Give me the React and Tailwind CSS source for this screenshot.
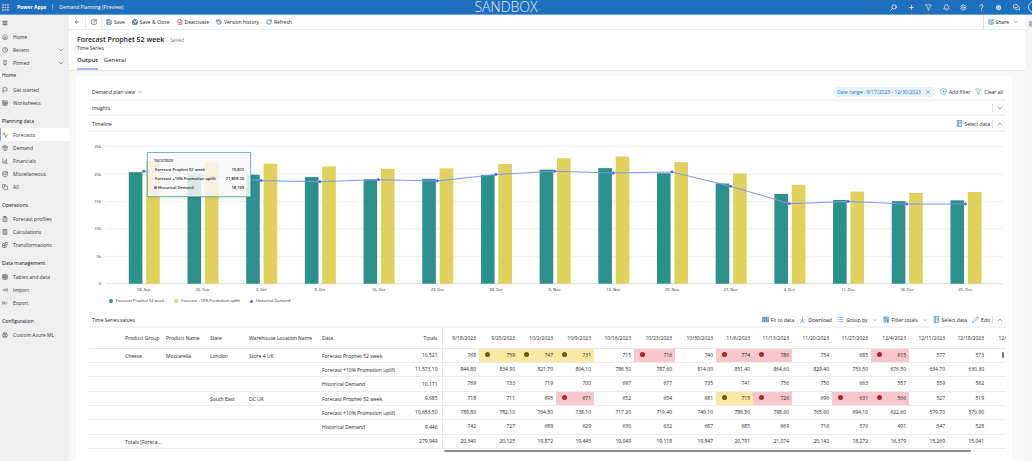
import React from "react";
import {
  ArrowDownToLine, ArrowLeft, ArrowLeftToLine, ArrowRightToLine, Bell, ChartColumnIncreasing, ChevronDown, ChevronUp, CirclePlus,
  Clock, Copy, Database, SquareArrowOutUpRight, FileX, Filter, Flag, Grid3x3, History, House, LayoutGrid,
  List, Menu, MessagesSquare, Activity, Package, Pencil, Pin, Plus, RotateCw, Save, SaveAll, Settings,
  FunnelX, Calculator, ClipboardList, Blocks, Sheet, X, Brain,
} from "lucide-react";

const homeNav = [
  { label: "Home", icon: House },
  { label: "Recent", icon: Clock, expandable: true },
  { label: "Pinned", icon: Pin, expandable: true },
];

const navGroups = [
  { title: "Planning data", items: [
    { label: "Forecasts", icon: Activity, active: true },
    { label: "Demand", icon: Package },
    { label: "Financials", icon: ChartColumnIncreasing },
    { label: "Miscellaneous", icon: Database },
    { label: "All", icon: Copy },
  ] },
  { title: "Operations", items: [
    { label: "Forecast profiles", icon: ClipboardList },
    { label: "Calculations", icon: Calculator },
    { label: "Transformations", icon: Blocks },
  ] },
  { title: "Data management", items: [
    { label: "Tables and data", icon: Grid3x3 },
    { label: "Import", icon: ArrowRightToLine },
    { label: "Export", icon: ArrowLeftToLine },
  ] },
  { title: "Configuration", items: [{ label: "Custom Azure ML", icon: Brain }] },
];

function NavItem({ label, icon: Icon, active, expandable }) {
  return (
    <a
      href="#"
      className={
        active
          ? "flex h-[13px] items-center border-l border-[#8fa0ee] bg-white pl-px text-[5px]"
          : "flex h-[13px] items-center pl-0.5 text-[5px]"
      }
    >
      <Icon className="size-1.5 text-[#444]" />
      <span className="ml-[5px] flex-1">{label}</span>
      {expandable && <ChevronDown className="mr-1 size-2 text-[#444]" strokeWidth={1.5} />}
    </a>
  );
}

function Sidebar() {
  return (
    <nav className="w-[69px] shrink-0 bg-[#efefef] text-[#333]">
      <div className="flex h-[15px] items-center pl-0.5">
        <button type="button" aria-label="Toggle navigation"><Menu className="size-1.5" strokeWidth={3} /></button>
      </div>
      {homeNav.map((item) => <NavItem key={item.label} {...item} />)}
      <h2 className="h-3.5 pl-0.5 text-[5px] leading-[13px] font-medium text-[#111]">Home</h2>
      <NavItem label="Get started" icon={Flag} />
      <NavItem label="Worksheets" icon={Sheet} />
      {navGroups.map((group) => (
        <section key={group.title}>
          <h2 className="h-[19px] pt-[5px] pl-0.5 text-[5px] leading-[14px] font-medium text-[#111]">{group.title}</h2>
          {group.items.map((item) => <NavItem key={item.label} {...item} />)}
        </section>
      ))}
    </nav>
  );
}

function AppLauncherIcon() {
  return (
    <svg viewBox="0 0 7 7" className="size-[7px]" fill="#c5dcf3">
      {[0, 2.5, 5].map((y) => [0, 2.5, 5].map((x) => <rect key={`${x}-${y}`} x={x + 0.2} y={y + 0.2} width="1.5" height="1.5" />))}
    </svg>
  );
}

function MirroredSearch({ className }) {
  return (
    <svg viewBox="0 0 24 24" className={className} fill="none" stroke="currentColor" strokeWidth="2.5" strokeLinecap="round">
      <circle cx="14" cy="10" r="7.5" />
      <path d="M8.5 15.5 2 22" />
    </svg>
  );
}

function HelpIcon({ className }) {
  return (
    <svg viewBox="0 0 24 24" className={className} fill="none" stroke="currentColor" strokeWidth="3" strokeLinecap="round">
      <path d="M7 7a5 5 0 1 1 8 4c-2 1.500-3 2.500-3 5" />
      <path d="M12 21.500v.1" />
    </svg>
  );
}

function FeedbackIcon({ className }) {
  return (
    <svg viewBox="0 0 24 24" className={className}>
      <circle cx="12" cy="12" r="9" fill="#c5dcf3" />
      <circle cx="9" cy="10" r="1.500" fill="#1f6fbd" />
      <circle cx="15" cy="10" r="1.500" fill="#1f6fbd" />
      <path d="M8 14.500q4 3.500 8 0" stroke="#1f6fbd" strokeWidth="1.500" fill="none" />
    </svg>
  );
}

function TableIcon({ className }) {
  return (
    <svg viewBox="0 0 24 24" className={className} fill="none" stroke="currentColor" strokeWidth="2">
      <rect x="2" y="4" width="20" height="16" fill="#b9d5f2" />
      <path d="M2 9h20M2 14.500h20M9 4v16M15.500 4v16" />
    </svg>
  );
}

function SelectDataIcon({ className }) {
  return (
    <svg viewBox="0 0 24 24" className={className} fill="none" stroke="currentColor" strokeWidth="2">
      <rect x="4" y="2" width="16" height="20" fill="#dcebfa" />
      <path d="M8.500 2v20M12 8h5M12 13h5" />
    </svg>
  );
}

function FilterTotalsIcon({ className }) {
  return (
    <svg viewBox="0 0 24 24" className={className} fill="none" stroke="currentColor" strokeWidth="2">
      <path d="M10 21H3V3h15v7M3 8h15M8 3v18" fill="#dcebfa" />
      <path d="M11 13h11l-4 4.500V22h-3v-4.500z" fill="currentColor" />
    </svg>
  );
}

const headerActions = [
  ["Search", MirroredSearch], ["New", Plus], ["Filter", Filter], ["Notifications", Bell],
  ["Settings", Settings], ["Help", HelpIcon], ["Feedback", FeedbackIcon], ["Chat", MessagesSquare],
];

function Header() {
  return (
    <header className="flex h-[15px] items-center border-b border-[#6aa3dc] bg-[#1f6fbd] text-white">
      <div className="flex flex-1 items-center">
        <button type="button" aria-label="App launcher" className="ml-0.5"><AppLauncherIcon /></button>
        <span className="ml-2 text-[5px] font-bold">Power Apps</span>
        <span className="mx-1.5 h-1.5 w-px bg-[#6aa3dc]" />
        <span className="text-[5px] font-medium">Demand Planning (Preview)</span>
      </div>
      <span className="mr-5 text-[14px] leading-[14px] font-light text-[#e4eff9]">SANDBOX</span>
      <div className="flex flex-1 items-center justify-end">
        <div className="flex w-[130px] justify-between">
          {headerActions.map(([label, Icon]) => (
            <button key={label} type="button" aria-label={label}><Icon className="size-[7px]" strokeWidth={2.2} /></button>
          ))}
        </div>
        <button type="button" aria-label="Account" className="-mr-2 ml-2 size-3 rounded-full border border-[#b9d5f0]" />
      </div>
    </header>
  );
}

function Command({ label, icon: Icon, tone }) {
  return (
    <button type="button" className="flex items-center gap-0.5">
      <Icon className={tone === "red" ? "size-1.5 text-[#b5434a]" : "size-1.5 text-[#2b4a70]"} strokeWidth={2.5} />
      {label}
    </button>
  );
}

function CommandBar() {
  return (
    <div className="flex h-[15px] items-center border-b border-[#ebebeb] bg-white text-[5px] text-[#222]">
      <button type="button" aria-label="Back" className="flex w-4 justify-center"><ArrowLeft className="size-1.5" /></button>
      <span className="h-full w-px bg-[#ebebeb]" />
      <button type="button" aria-label="Open in new window" className="flex w-[15px] justify-center"><SquareArrowOutUpRight className="size-1.5" /></button>
      <span className="h-full w-px bg-[#ebebeb]" />
      <div className="ml-1 flex gap-[7px]">
        <Command label="Save" icon={Save} />
        <Command label="Save & Close" icon={SaveAll} />
        <Command label="Deactivate" icon={FileX} tone="red" />
        <Command label="Version history" icon={History} />
        <Command label="Refresh" icon={RotateCw} />
      </div>
      <button type="button" className="ml-auto flex h-full items-center gap-0.5 border-l border-[#ddd] pr-1.5 pl-1">
        <SquareArrowOutUpRight className="size-1.5 fill-[#b9d5f2] text-[#2f6fbd]" />Share<ChevronDown className="ml-0.5 size-1.5" strokeWidth={1.5} />
      </button>
    </div>
  );
}

const weeks = ["18. Sep", "25. Sep", "2. Oct", "9. Oct", "16. Oct", "23. Oct", "30. Oct", "6. Nov", "13. Nov", "20. Nov", "27. Nov", "4. Dec", "11. Dec", "18. Dec", "25. Dec"];
const forecast = [20340, 20125, 19872, 19445, 19049, 19118, 19847, 20791, 21074, 20142, 18272, 16379, 15269, 15041, 15200];
const demand = [20500, 19750, 18779, 18600, 18960, 18720, 19910, 20500, 20180, 20370, 17760, 14590, 14990, 14530, 14530];

const BASE = 151.7;
const px = (i) => 54.8 + i * 58.69;
const py = (v) => BASE - v * 0.005485;

function Chart() {
  return (
    <svg viewBox="0 0 917 164" className="block h-auto w-full" role="img" aria-label="Timeline">
      {[0, 5, 10, 15, 20, 25].map((k) => (
        <g key={k}>
          <line x1="17" x2="914" y1={py(k * 1000)} y2={py(k * 1000)} stroke={k ? "#f1f1f1" : "#dcdfe6"} strokeWidth="1" />
          <text x="12" y={py(k * 1000) + 1.5} textAnchor="end" fontSize="4" fontWeight="500" fill="#222">{k ? `${k}k` : "0"}</text>
        </g>
      ))}
      {weeks.map((week, i) => (
        <g key={week}>
          <rect x={px(i) - 15} width="13.6" y={py(forecast[i])} height={BASE - py(forecast[i])} fill="#2c918d" />
          <rect x={px(i) + 2.4} width="13.6" y={py(forecast[i] * 1.1)} height={BASE - py(forecast[i] * 1.1)} fill="#e0d15c" />
          <line x1={px(i)} x2={px(i)} y1={BASE} y2={BASE + 2} stroke="#dcdfe6" strokeWidth="0.7" />
          <text x={px(i)} y="159" textAnchor="middle" fontSize="4" fontWeight="500" fill="#222">{week}</text>
        </g>
      ))}
      <polyline points={demand.map((v, i) => `${px(i)},${py(v)}`).join(" ")} fill="none" stroke="#8094ea" strokeWidth="1" />
      {demand.map((v, i) => <circle key={i} cx={px(i)} cy={py(v)} r="1.4" fill="#4a63e8" />)}
    </svg>
  );
}

function ChartTooltip() {
  const rows = [["Forecast Prophet 52 week", "19,872"], ["Forecast +10% Promotion uplift", "21,859.20"], ["Historical Demand", "18,739"]];
  return (
    <div className="absolute top-5 left-[58px] w-[104px] border border-[#7fb9b6] bg-[#f8f8f8]/85 px-1.5 pt-[3px] pb-1 text-[4px] leading-[9px] font-semibold text-[#222] shadow-sm">
      <div>10/2/2023</div>
      {rows.map(([name, value], i) => (
        <div key={name} className="flex items-center">
          {i === 2 ? <span className="mr-px size-[3px] rounded-full bg-[#4a63e8]" /> : <span className="w-px" />}
          <span className="flex-1">{name}</span>
          <span>{value}</span>
        </div>
      ))}
    </div>
  );
}

function Tool({ label, icon: Icon, menu }) {
  return (
    <button type="button" className="flex items-center gap-0.5">
      <Icon className="size-[7px] text-[#3f7fc8]" strokeWidth={1.8} />
      {label}
      {menu && <ChevronDown className="ml-0.5 size-1.5 text-[#666]" strokeWidth={1.5} />}
    </button>
  );
}

function SectionBar({ title, open, tall, children }) {
  return (
    <div className={tall ? "flex h-4 items-center border-b-2 border-[#f3f3f3] pt-px pl-[3px]" : "flex h-[15px] items-center border-b-2 border-[#f3f3f3] pl-[3px]"}>
      <h2 className="flex-1 font-medium">{title}</h2>
      <div className="flex items-center gap-[5px]">{children}</div>
      <span className="ml-0.5 h-2 w-px bg-[#ddd]" />
      <button type="button" aria-label={open ? `Collapse ${title}` : `Expand ${title}`} className="flex w-[13px] justify-center">
        {open ? <ChevronUp className="size-2 text-[#444]" strokeWidth={1.5} /> : <ChevronDown className="size-2 text-[#444]" strokeWidth={1.5} />}
      </button>
    </div>
  );
}

const dates = ["9/18/2023", "9/25/2023", "10/2/2023", "10/9/2023", "10/16/2023", "10/23/2023", "10/30/2023", "11/6/2023", "11/13/2023", "11/20/2023", "11/27/2023", "12/4/2023", "12/11/2023", "12/18/2023"];
const columnWidths = ["w-[37px]", "w-[39px]", "w-[38px]", "w-[38px]", "w-[40px]", "w-[41px]", "w-[41px]", "w-[37px]", "w-[39px]", "w-[40px]", "w-[39px]", "w-[38px]", "w-[39px]", "w-[39px]"];

const tableRows = [
  { lead: ["Cheese", "Mozzarella", "London", "Store 4 UK", "Forecast Prophet 52 week"], total: "10,521",
    values: "768 759 747 731 715 716 740 774 786 754 685 615 577 573", marks: { 1: "y", 2: "y", 3: "y", 5: "r", 7: "r", 8: "r", 11: "r" } },
  { lead: ["", "", "", "", "Forecast +10% Promotion uplift"], total: "11,573.10",
    values: "844.80 834.90 821.70 804.10 786.50 787.60 814.00 851.40 864.60 829.40 753.50 676.50 634.70 630.30" },
  { lead: ["", "", "", "", "Historical Demand"], total: "10,171", last: true,
    values: "769 733 719 700 697 677 735 741 756 750 663 557 559 562" },
  { lead: ["", "", "South East", "DC UK", "Forecast Prophet 52 week"], total: "9,685",
    values: "718 711 695 671 652 654 681 715 726 696 631 566 527 519", marks: { 3: "r", 7: "y", 8: "r", 10: "r", 11: "r" } },
  { lead: ["", "", "", "", "Forecast +10% Promotion uplift"], total: "10,653.50",
    values: "789.80 782.10 764.50 738.10 717.20 719.40 749.10 786.50 798.60 765.60 694.10 622.60 579.70 570.90" },
  { lead: ["", "", "", "", "Historical Demand"], total: "9,446", last: true,
    values: "742 727 689 629 630 632 687 685 669 716 576 491 547 528" },
  { lead: ["Totals [Foreca...", "", "", "", ""], total: "279,949",
    values: "20,340 20,125 19,872 19,445 19,049 19,118 19,847 20,791 21,074 20,142 18,272 16,379 15,269 15,041" },
];

function ValueCell({ value, mark }) {
  const tone = mark === "y" ? "bg-[#fbe9a3]" : mark === "r" ? "bg-[#f8c6cd]" : "";
  return (
    <td className={`p-0 pr-[3px] pb-px text-right ${tone}`}>
      <div className="flex items-center justify-end">
        {mark && <span className={mark === "y" ? "mr-auto ml-1.5 size-[5px] rounded-full bg-[#6b5a12]" : "mr-auto ml-1.5 size-[5px] rounded-full bg-[#a8232f]"} />}
        <span>{value}</span>
      </div>
    </td>
  );
}

function SeriesTable() {
  return (
    <div className="relative overflow-hidden">
      <table className="w-[917px] table-fixed border-collapse leading-[8px]">
        <colgroup>
          <col className="w-9" /><col className="w-[41px]" /><col className="w-11" /><col className="w-[39px]" />
          <col className="w-[73px]" /><col className="w-[80px]" /><col className="w-10" />
          {columnWidths.map((w, i) => <col key={i} className={w} />)}
          <col />
        </colgroup>
        <thead>
          <tr className="h-5 border-b border-[#e8e8e8] text-left">
            <th className="p-0" />
            {["Product Group", "Product Name", "State", "Warehouse Location Name", "Data"].map((h) => (
              <th key={h} className="p-0 font-medium whitespace-nowrap">{h}</th>
            ))}
            <th className="border-r border-[#e8e8e8] p-0 pr-1 text-right font-medium">Totals</th>
            {dates.map((d) => <th key={d} className="p-0 pr-[3px] text-right font-medium">{d}</th>)}
            <th className="p-0 text-right font-medium whitespace-nowrap">12/</th>
          </tr>
        </thead>
        <tbody>
          {tableRows.map((row, r) => (
            <tr key={r} className={row.last ? "h-[15px] border-b border-[#ececec]" : "h-3.5 border-b border-[#ececec]"}>
              <td className="p-0" />
              {row.lead.map((text, i) => <td key={i} className="p-0 pt-px whitespace-nowrap">{text}</td>)}
              <td className="border-r border-[#e8e8e8] p-0 pr-1 text-right">{row.total}</td>
              {row.values.split(" ").map((v, i) => <ValueCell key={i} value={v} mark={row.marks && row.marks[i]} />)}
              <td className="p-0" />
            </tr>
          ))}
        </tbody>
      </table>
      <span className="absolute top-6 right-0.5 h-1.5 w-0.5 rounded-full bg-[#777]" />
    </div>
  );
}

export default function App() {
  return (
    <div className="flex min-h-screen flex-col overflow-hidden bg-white font-['Open_Sans','Noto_Sans',sans-serif] text-[5px] leading-[8px] text-[#1c1c1c]">
      <Header />
      <div className="flex flex-1">
        <Sidebar />
        <main className="flex min-w-0 flex-1 flex-col bg-[#f9f8f7]">
          <CommandBar />
          <div className="border-b border-[#e6e6e6] bg-white pt-[5px] pl-2">
            <div className="flex h-[9px] items-center gap-[3px]">
              <h1 className="text-[7px] font-semibold">Forecast Prophet 52 week</h1>
              <span className="text-[#777]">- Saved</span>
            </div>
            <p>Time Series</p>
            <div role="tablist" className="mt-1 flex gap-1.5 text-[6px]">
              <button type="button" role="tab" aria-selected="true" className="border-b-2 border-[#aab6f2] pb-1 font-semibold">Output</button>
              <button type="button" role="tab" aria-selected="false" className="border-b-2 border-transparent pb-1">General</button>
            </div>
          </div>
          <div className="mt-[5px] mr-[13px] ml-[7px] flex-1 bg-white pt-2 pr-1.5 pl-[13px]">
            <div className="flex h-[17px] items-center border-b-2 border-[#f3f3f3] pr-[3px] pl-[3px]">
              <button type="button" className="flex items-center gap-0.5">Demand plan view<ChevronDown className="size-1.5" strokeWidth={1.5} /></button>
              <div className="ml-auto flex items-center gap-[5px]">
                <span className="flex h-2.5 items-center gap-1 rounded-full bg-[#e8f2fc] px-1 text-[#2b6cb8]">
                  Date range : 9/17/2023 - 12/30/2023
                  <button type="button" aria-label="Remove date range"><X className="size-1.5" /></button>
                </span>
                <Tool label="Add filter" icon={CirclePlus} />
                <Tool label="Clear all" icon={FunnelX} />
              </div>
            </div>
            <SectionBar title="Insights" />
            <SectionBar title="Timeline" open tall><Tool label="Select data" icon={SelectDataIcon} /></SectionBar>
            <div className="relative">
              <Chart />
              <ChartTooltip />
            </div>
            <div className="flex h-4 gap-2.5 pt-px pl-5 text-[4px] text-[#222]">
              <span className="flex h-2 items-center gap-[3px]"><i className="size-1 rounded-full bg-[#2c918d]" />Forecast Prophet 52 week</span>
              <span className="flex h-2 items-center gap-[3px]"><i className="size-1 rounded-full bg-[#e0d15c]" />Forecast +10% Promotion uplift</span>
              <span className="flex h-2 items-center gap-[3px]"><i className="size-[3px] rounded-full bg-[#4a63e8]" />Historical Demand</span>
            </div>
            <SectionBar title="Time Series values" open tall>
              <Tool label="Fit to data" icon={TableIcon} />
              <Tool label="Download" icon={ArrowDownToLine} />
              <Tool label="Group by" icon={List} menu />
              <Tool label="Filter totals" icon={FilterTotalsIcon} menu />
              <Tool label="Select data" icon={SelectDataIcon} />
              <Tool label="Edit" icon={Pencil} />
            </SectionBar>
            <SeriesTable />
            <div className="mt-px mr-[35px] ml-[355px] h-0.5 rounded-full bg-[#8c8c8c]" />
          </div>
        </main>
        <aside className="w-[7px] shrink-0 overflow-hidden bg-[#f6f6f6] pt-1.5 pl-1">
          <button type="button" aria-label="Copilot"><LayoutGrid className="size-1.5 text-[#2f6fbd]" /></button>
        </aside>
      </div>
    </div>
  );
}
